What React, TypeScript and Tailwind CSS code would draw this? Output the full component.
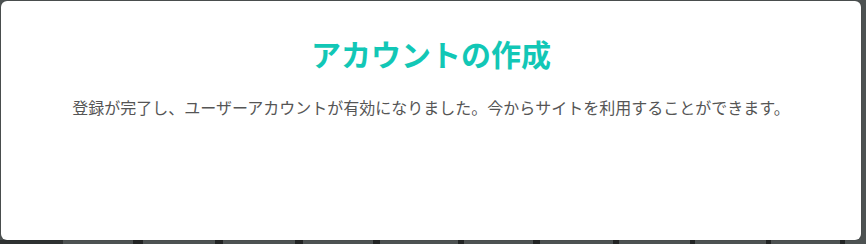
import React from "react";

const marks = [
  { l: 0, w: 63, c: "bg-[#2e3131]" },
  { l: 133, w: 10, c: "bg-[#222424]" },
  { l: 215, w: 8, c: "bg-[#222424]" },
  { l: 295, w: 8, c: "bg-[#222424]" },
  { l: 373, w: 7, c: "bg-[#222424]" },
  { l: 458, w: 6, c: "bg-[#222424]" },
  { l: 533, w: 7, c: "bg-[#222424]" },
  { l: 613, w: 6, c: "bg-[#222424]" },
  { l: 690, w: 5, c: "bg-[#222424]" },
  { l: 766, w: 5, c: "bg-[#222424]" },
  { l: 840, w: 5, c: "bg-[#222424]" },
];

export default function App() {
  return (
    <div
      className="relative h-[244px] w-[866px] overflow-hidden bg-[#4d5252] flex flex-col justify-end"
      style={{ fontFamily: '"Noto Sans CJK JP", "Noto Sans", sans-serif' }}
    >
      <div className="relative h-[4px] w-full">
        {marks.map((m, i) => (
          <div
            key={i}
            className={`absolute top-0 h-[4px] ${m.c}`}
            style={{ left: m.l, width: m.w }}
          />
        ))}
      </div>
      <div className="absolute left-[1px] top-[1px] w-[860px] h-[239px] rounded-md bg-white shadow-[0_0_1px_rgba(0,0,0,0.5)] flex flex-col items-center pt-[34px]">
        <h1 className="text-[30px] leading-[36px] font-bold text-[#12c7b6]">
          アカウントの作成
        </h1>
        <p className="mt-[24px] text-[16px] leading-[24px] text-[#555555]">
          登録が完了し、ユーザーアカウントが有効になりました。今からサイトを利用することができます。
        </p>
      </div>
    </div>
  );
}
